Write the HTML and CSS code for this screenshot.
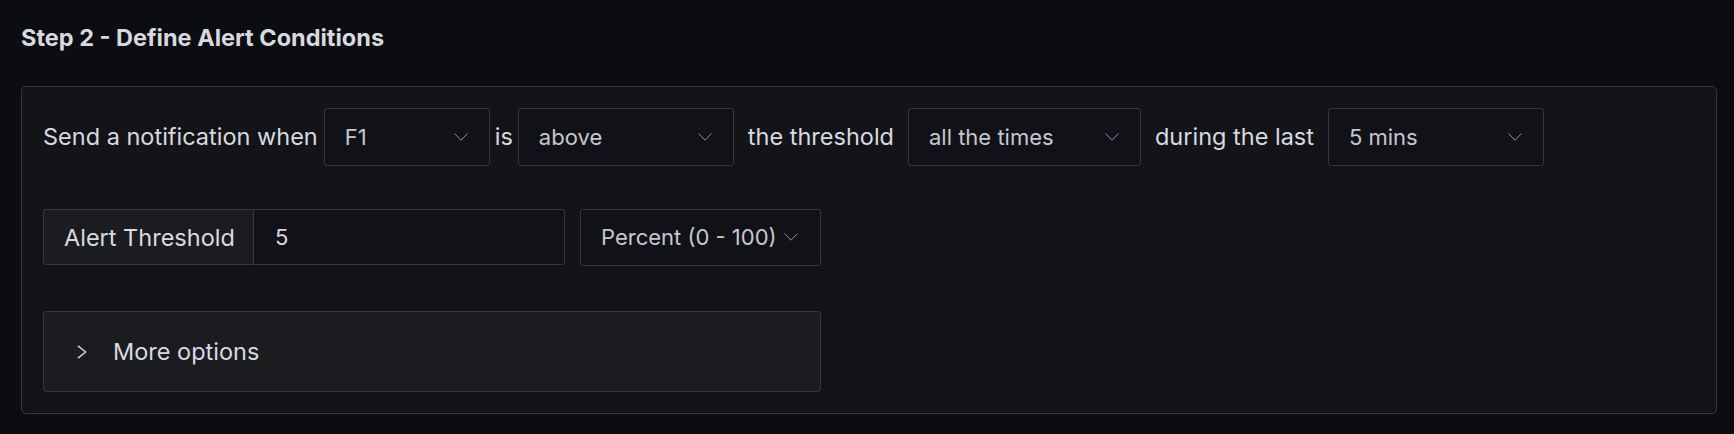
FILE: index.html
```html
<!DOCTYPE html>
<html lang="en">
<head>
<meta charset="utf-8">
<title>Define Alert Conditions</title>
<link rel="stylesheet" href="styles.css">
</head>
<body>
<h2 class="step-title">Step 2 - Define Alert Conditions</h2>
<section class="panel">
  <div class="row row-conditions">
    <span class="label label-first">Send a notification when</span>
    <div class="select select-f1"><span class="select-value">F1</span><svg class="chev" viewBox="0 0 14 8"><path d="M0.5 0.5 L7 7.2 L13.5 0.5" /></svg></div>
    <span class="label label-is">is</span>
    <div class="select select-above"><span class="select-value">above</span><svg class="chev" viewBox="0 0 14 8"><path d="M0.5 0.5 L7 7.2 L13.5 0.5" /></svg></div>
    <span class="label label-wide">the threshold</span>
    <div class="select select-times"><span class="select-value">all the times</span><svg class="chev" viewBox="0 0 14 8"><path d="M0.5 0.5 L7 7.2 L13.5 0.5" /></svg></div>
    <span class="label label-wide">during the last</span>
    <div class="select select-mins"><span class="select-value">5 mins</span><svg class="chev" viewBox="0 0 14 8"><path d="M0.5 0.5 L7 7.2 L13.5 0.5" /></svg></div>
  </div>
  <div class="row row-threshold">
    <div class="field">
      <span class="addon">Alert Threshold</span>
      <span class="input">5</span>
    </div>
    <div class="select select-unit"><span class="select-value">Percent (0 - 100)</span><svg class="chev" viewBox="0 0 14 8"><path d="M0.5 0.5 L7 7.2 L13.5 0.5" /></svg></div>
  </div>
  <div class="more">
    <svg class="more-chev" viewBox="0 0 10 14"><path d="M1 0.8 L8.6 7 L1 13.2" /></svg>
    <span class="more-label">More options</span>
  </div>
</section>
</body>
</html>
```
FILE: styles.css
```css
html, body {
  margin: 0;
  padding: 0;
  background: #0c0d10;
}

body {
  font-family: Inter, "Noto Sans", sans-serif;
  color: #d9dae0;
}

.step-title {
  margin: 0 0 34px 21px;
  padding-top: 23px;
  font-size: 23.5px;
  line-height: 29px;
  font-weight: 700;
  color: #d8d9de;
}

.panel {
  margin: 0 17px 0 21px;
  background: #131418;
  border: 1px solid #36383e;
  border-radius: 5px;
  padding: 21px 21px 21px 21px;
}

.row {
  display: flex;
  align-items: center;
}

.row-conditions {
  height: 58px;
  margin-bottom: 43px;
}

.row-threshold {
  height: 56px;
  margin-bottom: 46px;
}

.label {
  font-size: 23.5px;
  line-height: 30px;
  white-space: nowrap;
  color: #d9dae0;
}

.label-first {
  margin-right: 6px;
}

.label-is {
  margin: 0 5px;
}

.label-wide {
  margin: 0 14px;
}

.select {
  box-sizing: border-box;
  height: 58px;
  display: flex;
  align-items: center;
  justify-content: space-between;
  padding: 0 21px 0 20px;
  background: #111217;
  border: 1px solid #35373d;
  border-radius: 3px;
  flex: none;
}

.select-f1 { width: 166px; }
.select-above { width: 216px; }
.select-times { width: 233px; }
.select-mins { width: 216px; }

.select-unit {
  width: 241px;
  height: 57px;
  margin-left: 15px;
  padding-right: 22px;
}

.select-value {
  font-size: 22px;
  line-height: 28px;
  color: #c6c7cf;
  white-space: nowrap;
}

.chev {
  width: 14px;
  height: 8px;
  flex: none;
  fill: none;
  stroke: #8f919a;
  stroke-width: 1;
}

.field {
  display: flex;
  height: 56px;
}

.addon {
  box-sizing: border-box;
  width: 211px;
  height: 56px;
  display: flex;
  align-items: center;
  padding-left: 20px;
  font-size: 23.5px;
  background: #1b1c20;
  border: 1px solid #35373d;
  border-radius: 3px 0 0 3px;
  color: #d9dae0;
  white-space: nowrap;
}

.input {
  box-sizing: border-box;
  width: 311px;
  height: 56px;
  display: flex;
  align-items: center;
  padding-left: 21px;
  font-size: 22px;
  background: #111217;
  border: 1px solid #35373d;
  border-left: none;
  border-radius: 0 3px 3px 0;
  color: #d9dae0;
}

.more {
  box-sizing: border-box;
  width: 778px;
  height: 81px;
  display: flex;
  align-items: center;
  padding-left: 33px;
  background: #1b1c20;
  border: 1px solid #35373d;
  border-radius: 3px;
}

.more-chev {
  width: 10px;
  height: 14px;
  fill: none;
  stroke: #d0d1d8;
  stroke-width: 1.5;
  margin-right: 26px;
}

.more-label {
  font-size: 23.5px;
  color: #d9dae0;
}
```
